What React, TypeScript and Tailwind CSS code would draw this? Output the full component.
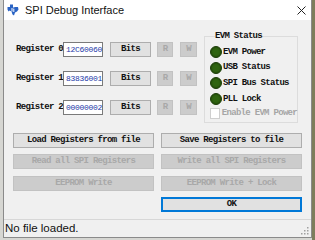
import React from "react";

const mono = "font-['Liberation_Mono',monospace] font-bold text-[9px] tracking-[-0.7px] leading-none";

function Btn({ label, w, disabled = false, className = "" }: { label: string; w: string; disabled?: boolean; className?: string }) {
  return (
    <div
      className={`${w} h-[15px] flex items-center justify-center border ${
        disabled ? "bg-[#cccccc] border-[#c2c2c2] text-[#a8a8a8]" : "bg-[#e1e1e1] border-[#adadad] text-[#111]"
      } ${mono} ${className}`}
    >
      {label}
    </div>
  );
}

function RegRow({ n, value }: { n: number; value: string }) {
  return (
    <div className="flex items-center h-[15px]">
      <span className={`${mono} text-[#111] w-[47px] whitespace-nowrap`}>Register {n}</span>
      <div className="w-[40px] h-[15px] bg-white border border-[#7a7a7a] flex items-center pl-[2px]">
        <span className="font-['Liberation_Mono',monospace] text-[8px] tracking-[-0.3px] leading-none text-[#1e3aa8]">{value}</span>
      </div>
      <Btn label="Bits" w="w-[41px]" className="ml-[7px]" />
      <Btn label="R" w="w-[16px]" disabled className="ml-[6px]" />
      <Btn label="W" w="w-[17px]" disabled className="ml-[7px]" />
    </div>
  );
}

function Led({ label }: { label: string }) {
  return (
    <div className="flex items-center h-[12px] gap-[1px]">
      <div className="w-[12px] h-[12px] rounded-full bg-[#2f6410] border border-[#1c3d08] shadow-[inset_0_0_2px_#173305]" />
      <span className={`${mono} text-[#111]`}>{label}</span>
    </div>
  );
}

function TiLogo() {
  return (
    <svg width="12" height="12" viewBox="0 0 12 12">
      <path
        d="M3 0.5 H6 V3 H11 L11.5 5.5 L10 7.5 L8 8.5 L7 11.5 L5.5 10.5 L4.5 7.5 L2.5 6.5 L1.5 7.5 L0.5 5.5 L0.5 3 H3 Z"
        fill="#2a63c4"
      />
      <path d="M5 4 V7.5 M6.8 5 V8" stroke="#fff" strokeWidth="1" />
      <circle cx="6.8" cy="3.8" r="0.6" fill="#fff" />
    </svg>
  );
}

export default function App() {
  return (
    <div className="w-[315px] h-[240px] flex bg-[#d6d6d2] overflow-hidden">
      <div className="ml-[3px] w-[309px] h-[238px] flex flex-col border border-t-0 border-[#8a8a8a] bg-[#f0f0f0]">
        {/* title bar */}
        <div className="h-[20px] bg-white flex items-center pl-[3px] pr-[5px]">
          <TiLogo />
          <span className="ml-[6px] font-['Liberation_Sans',sans-serif] text-[11px] text-[#111] leading-none">SPI Debug Interface</span>
          <svg className="ml-auto" width="9" height="9" viewBox="0 0 9 9">
            <path d="M0.5 0.5 L8.5 8.5 M8.5 0.5 L0.5 8.5" stroke="#222" strokeWidth="1" />
          </svg>
        </div>

        {/* body */}
        <div className="flex-1 flex flex-col">
          <div className="h-[103px] flex">
            <div className="pl-[12px] pt-[22px] flex flex-col gap-[14px]">
              <RegRow n={0} value="12C60060" />
              <RegRow n={1} value="83836001" />
              <RegRow n={2} value="00000002" />
            </div>
            <fieldset className="ml-[7px] mt-[12px] w-[94px] h-[91px] border border-[#dcdcdc] pl-[5px] pt-[5px] min-w-0">
              <legend className={`${mono} ml-[5px] text-[#111] px-0`}>EVM Status</legend>
              <div className="flex flex-col gap-[3.7px]">
                <Led label="EVM Power" />
                <Led label="USB Status" />
                <Led label="SPI Bus Status" />
                <Led label="PLL Lock" />
                <div className="flex items-center h-[12px] gap-[2px] whitespace-nowrap -mt-[1px]">
                  <div className="w-[11px] h-[11px] bg-white border border-[#cfcfcf]" />
                  <span className={`${mono} text-[#a6a6a6]`}>Enable EVM Power</span>
                </div>
              </div>
            </fieldset>
          </div>

          <div className="mt-[10px] pl-[9px] grid grid-cols-[141px_141px] gap-x-[7px] gap-y-[6px]">
            <Btn label="Load Registers from file" w="w-full" />
            <Btn label="Save Registers to file" w="w-full" />
            <Btn label="Read all SPI Registers" w="w-full" disabled />
            <Btn label="Write all SPI Registers" w="w-full" disabled />
            <Btn label="EEPROM Write" w="w-full" disabled className="mt-[1px]" />
            <Btn label="EEPROM Write + Lock" w="w-full" disabled className="mt-[1px]" />
            <div />
            <div className="h-[15px] flex items-center justify-center bg-[#e1e1e1] border-2 border-[#0078d7]">
              <span className={`${mono} text-[#111]`}>OK</span>
            </div>
          </div>
        </div>

        {/* status bar */}
        <div className="h-[18px] border-t border-[#d7d7d7] flex items-center pl-[1px] pr-[2px]">
          <span className="font-['Liberation_Sans',sans-serif] text-[11.5px] text-[#111] leading-none">No file loaded.</span>
          <svg className="ml-auto self-end mb-[2px]" width="8" height="8" viewBox="0 0 8 8">
            <g fill="#a0a0a0">
              <rect x="6" y="0" width="1.5" height="1.5" />
              <rect x="3" y="3" width="1.5" height="1.5" />
              <rect x="6" y="3" width="1.5" height="1.5" />
              <rect x="0" y="6" width="1.5" height="1.5" />
              <rect x="3" y="6" width="1.5" height="1.5" />
              <rect x="6" y="6" width="1.5" height="1.5" />
            </g>
          </svg>
        </div>
      </div>
      <div className="flex-1 bg-[#7d7d5c]" />
    </div>
  );
}
